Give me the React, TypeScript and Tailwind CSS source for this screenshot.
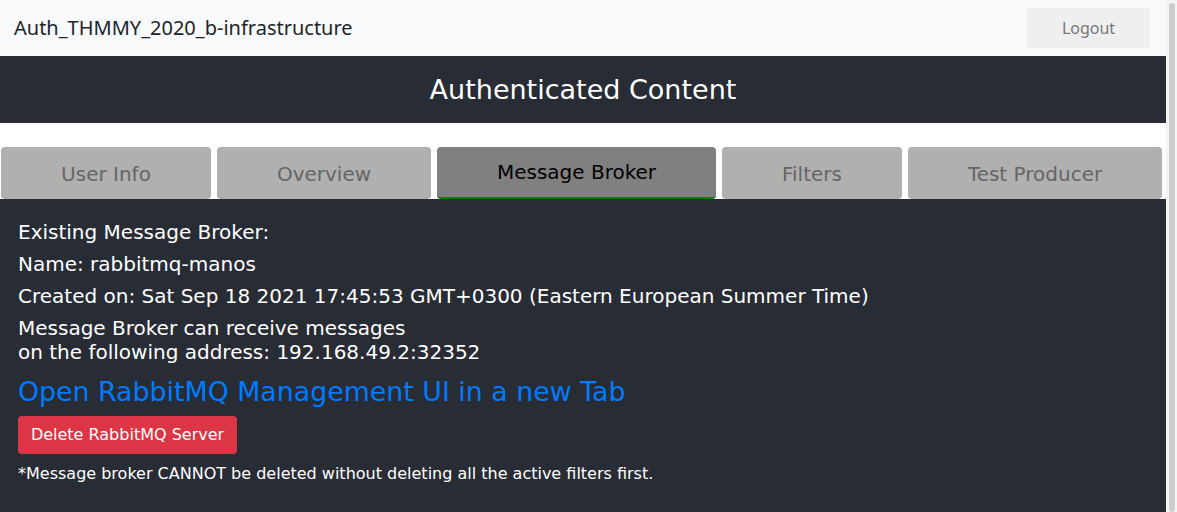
import React from "react";

const tabs = [
  { label: "User Info", w: "w-[210px]", active: false },
  { label: "Overview", w: "w-[214px]", active: false },
  { label: "Message Broker", w: "w-[279px]", active: true },
  { label: "Filters", w: "w-[180px]", active: false },
  { label: "Test Producer", w: "w-[254px]", active: false },
];

export default function App() {
  return (
    <div className="flex h-[512px] w-[1177px] overflow-hidden bg-white">
      <div className="flex w-[1166px] flex-col">
        <nav className="flex h-[56px] items-center justify-between bg-[#f8f9fa] pl-[14px] pr-[16px]">
          <span className="text-[20px] text-[#212529] [font-family:'Noto_Sans',sans-serif]">
            Auth_THMMY_2020_b-infrastructure
          </span>
          <button className="h-[40px] w-[123px] bg-[#efefef] text-[16px] text-[#777777] [font-family:'Noto_Sans',sans-serif]">
            Logout
          </button>
        </nav>
        <header className="flex h-[67px] items-center justify-center bg-[#282c34] pt-[2px] text-[27px] text-white [font-family:'DejaVu_Sans',sans-serif]">
          Authenticated Content
        </header>
        <div className="flex gap-[6px] bg-white pl-[1px] pt-[24px] [font-family:'DejaVu_Sans',sans-serif]">
          {tabs.map((t) => (
            <div
              key={t.label}
              className={
                t.active
                  ? `${t.w} flex h-[52px] items-center justify-center rounded-[4px] border-b-[2px] border-[#0a800a] bg-[#808080] text-[20px] text-black`
                  : `${t.w} flex h-[52px] items-center justify-center rounded-[4px] bg-[#b0b0b0] pt-[2px] text-[20px] text-[#666666]`
              }
            >
              {t.label}
            </div>
          ))}
        </div>
        <main className="flex-1 bg-[#282c34] px-[18px] pt-[21px] text-white [font-family:'DejaVu_Sans',sans-serif]">
          <p className="mb-[8px] text-[20px] leading-[24px]">Existing Message Broker:</p>
          <p className="mb-[8px] text-[20px] leading-[24px]">Name: rabbitmq-manos</p>
          <p className="mb-[8px] text-[20px] leading-[24px]">
            Created on: Sat Sep 18 2021 17:45:53 GMT+0300 (Eastern European Summer Time)
          </p>
          <p className="text-[20px] leading-[24px]">
            Message Broker can receive messages
            <br />
            on the following address: 192.168.49.2:32352
          </p>
          <a href="#" className="mt-[11px] block text-[26.8px] leading-[34px] text-[#007bff]">
            Open RabbitMQ Management UI in a new Tab
          </a>
          <button className="mt-[7px] h-[38px] w-[219px] rounded-[4px] bg-[#dc3545] text-[16px] text-white">
            Delete RabbitMQ Server
          </button>
          <p className="mt-[10px] text-[16px] leading-[20px]">
            *Message broker CANNOT be deleted without deleting all the active filters first.
          </p>
        </main>
      </div>
      <div className="w-[11px] bg-[#f4f4f4] pl-[3px] pr-[2px] pt-[3px]">
        <div className="h-full rounded-full bg-[#cdcdcd]" />
      </div>
    </div>
  );
}
